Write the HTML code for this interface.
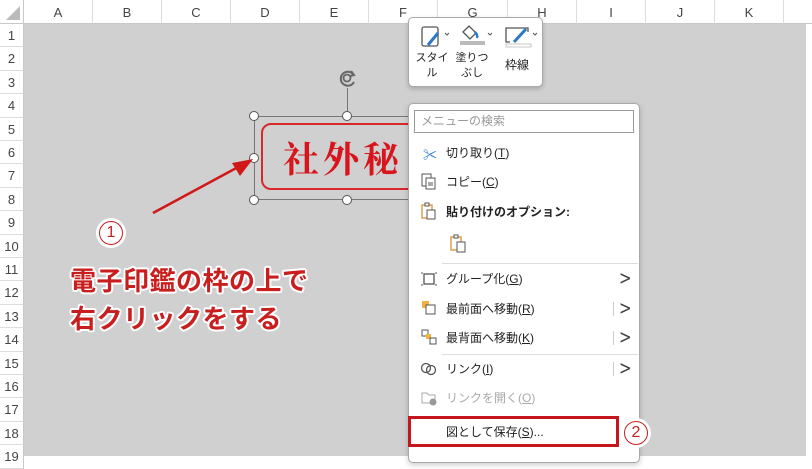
<!DOCTYPE html>
<html><head><meta charset="utf-8"><style>
*{margin:0;padding:0;box-sizing:border-box}
body{width:812px;height:456px;overflow:hidden;background:#fff;position:relative;font-family:"Liberation Sans","Noto Sans CJK JP",sans-serif}
.abs{position:absolute}
.gray{left:24px;top:24px;width:782px;height:432px;background:#d0d0d0}
.colh{top:0;height:24px;font-size:13px;color:#444;text-align:center;line-height:26px;border-right:1px solid #ddd;border-bottom:1px solid #c8c8c8;background:#fff}
.rowh{left:0;width:24px;font-size:13px;color:#444;text-align:center;border-bottom:1px solid #ddd;border-right:1px solid #c8c8c8;background:#fff}
.menu{left:408px;top:103px;width:232px;height:360px;background:#fff;border:1px solid #aaa;border-radius:5px;box-shadow:0 2px 6px rgba(0,0,0,.2)}
.it{left:446px;font-size:12px;color:#222;line-height:16px}
.ar{left:619px;font-size:15px;color:#444;font-family:"DejaVu Sans",sans-serif;transform:scaleY(1.3)}
.ann{font-size:26px;color:#c81e1e;font-weight:bold;letter-spacing:0.5px;text-shadow:2px 0 #fff,-2px 0 #fff,0 2px #fff,0 -2px #fff,1.5px 1.5px #fff,-1.5px -1.5px #fff,1.5px -1.5px #fff,-1.5px 1.5px #fff}
.h{width:10px;height:10px;border:1.5px solid #555;border-radius:50%;background:#fff;position:absolute}
.tb{font-size:11px;line-height:15px;text-align:center;color:#222;white-space:nowrap}
</style></head><body>
<div class="abs gray"></div>
<div class="abs" style="left:0;top:0;width:24px;height:24px;background:#fff;border-right:1px solid #c8c8c8;border-bottom:1px solid #c8c8c8"><div style="position:absolute;right:3px;bottom:3px;width:0;height:0;border-left:14px solid transparent;border-bottom:14px solid #bbb"></div></div>
<div class="abs colh" style="left:24px;width:69px">A</div>
<div class="abs colh" style="left:93px;width:69px">B</div>
<div class="abs colh" style="left:162px;width:69px">C</div>
<div class="abs colh" style="left:231px;width:69px">D</div>
<div class="abs colh" style="left:300px;width:69px">E</div>
<div class="abs colh" style="left:369px;width:69px">F</div>
<div class="abs colh" style="left:438px;width:70px">G</div>
<div class="abs colh" style="left:508px;width:69px">H</div>
<div class="abs colh" style="left:577px;width:69px">I</div>
<div class="abs colh" style="left:646px;width:69px">J</div>
<div class="abs colh" style="left:715px;width:69px">K</div>
<div class="abs colh" style="left:784px;width:28px;border-right:none"></div>
<div id="rows"></div>
<script>
var s='';for(var i=1;i<=19;i++){var t=24+(i-1)*23.4;s+='<div class="abs rowh" style="top:'+t+'px;height:23.4px;line-height:24px">'+i+'</div>';}
document.getElementById('rows').innerHTML=s;
</script>
<!-- stamp -->
<div class="abs" style="left:254px;top:116px;width:186px;height:84px;border:1px solid #777"></div>
<div class="abs" style="left:261px;top:123px;width:160px;height:67px;border:2px solid #d8282a;border-radius:10px"></div>
<div class="abs" style="left:283px;top:132px;font-family:'Noto Serif CJK SC','Liberation Serif',serif;font-size:36px;color:#d8141c;font-weight:bold;letter-spacing:4px">社外秘</div>
<div class="abs" style="left:347px;top:88px;width:1px;height:28px;background:#777"></div>
<svg class="abs" style="left:337px;top:68px" width="22" height="22" viewBox="0 0 22 22"><path d="M16 6A7 7 0 1 0 17 14" fill="none" stroke="#666" stroke-width="2"/><path d="M14 3l3 4-4 1" fill="none" stroke="#666" stroke-width="2"/><circle cx="10" cy="10" r="3.5" fill="none" stroke="#666" stroke-width="1.8"/></svg>
<div class="h" style="left:249px;top:111px"></div>
<div class="h" style="left:342px;top:111px"></div>
<div class="h" style="left:249px;top:153px"></div>
<div class="h" style="left:249px;top:195px"></div>
<div class="h" style="left:342px;top:195px"></div>
<svg class="abs" style="left:0;top:0" width="300" height="260"><line x1="153" y1="213" x2="240" y2="166" stroke="#d01818" stroke-width="2.5"/><polygon points="253,159 232,163 240,176" fill="#d01818"/></svg>
<!-- annotation -->
<div class="abs" style="left:96px;top:218px;width:30px;height:30px;border-radius:50%;background:#fff"></div>
<div class="abs" style="left:99px;top:221px;width:24px;height:24px;border-radius:50%;border:1.5px solid #c81e1e;color:#c81e1e;font-size:16px;text-align:center;line-height:21px">1</div>
<div class="abs ann" style="left:70px;top:261px">電子印鑑の枠の上で</div>
<div class="abs ann" style="left:70px;top:299px">右クリックをする</div>
<!-- toolbar -->
<div class="abs" style="left:408px;top:17px;width:135px;height:70px;background:#fff;border:1px solid #aaa;border-radius:5px;box-shadow:0 2px 5px rgba(0,0,0,.2)"></div>
<svg class="abs" style="left:418px;top:24px" width="125" height="28"><rect x="4" y="3" width="16" height="19" rx="2" fill="none" stroke="#555" stroke-width="1.3"/><path d="M10 21l10-12" stroke="#2b78c5" stroke-width="3"/><path d="M27 9l2 2 2-2" fill="none" stroke="#555"/><path d="M45 8l6-6 7 7-6 6z" fill="none" stroke="#555" stroke-width="1.3"/><path d="M57 8q3 3 2 6" stroke="#2b78c5" stroke-width="2.5" fill="none"/><rect x="42" y="17" width="25" height="4" fill="#bbb"/><path d="M70 9l2 2 2-2" fill="none" stroke="#555"/><path d="M92 18h-4V4h22v4" fill="none" stroke="#555" stroke-width="1.3"/><path d="M96 18l12-13" stroke="#2b78c5" stroke-width="3"/><rect x="88" y="20" width="25" height="3" fill="#fff" stroke="#bbb" stroke-width=".8"/><path d="M115 9l2 2 2-2" fill="none" stroke="#555"/></svg>
<div class="abs tb" style="left:412px;top:51px;width:40px">スタイ<br>ル</div>
<div class="abs tb" style="left:452px;top:51px;width:40px">塗りつ<br>ぶし</div>
<div class="abs tb" style="left:497px;top:58px;width:40px;font-size:12px">枠線</div>
<!-- menu -->
<div class="abs menu"></div>
<div class="abs" style="left:414px;top:110px;width:220px;height:23px;border:1px solid #999;font-size:12px;color:#999;padding-left:6px;line-height:21px">メニューの検索</div>
<div class="abs" style="left:423px;top:145px;font-size:14px;color:#2b78c5">✂</div>
<div class="abs it" style="top:145px">切り取り(<u>T</u>)</div>
<svg class="abs" style="left:421px;top:173px" width="16" height="17"><rect x="1" y="1" width="9" height="12" fill="none" stroke="#555"/><rect x="5" y="5" width="9" height="11" fill="#fff" stroke="#555"/><path d="M7 10h5M7 12h5" stroke="#555"/></svg>
<div class="abs it" style="top:174px">コピー(<u>C</u>)</div>
<svg class="abs" style="left:421px;top:202px" width="16" height="18"><rect x="1" y="3" width="10" height="13" fill="none" stroke="#d9922e" stroke-width="1.3"/><rect x="4" y="1" width="4" height="3" fill="#fff" stroke="#555"/><rect x="6" y="8" width="8" height="9" fill="#fff" stroke="#555"/></svg>
<div class="abs it" style="top:204px;font-weight:bold">貼り付けのオプション:</div>
<svg class="abs" style="left:450px;top:234px" width="18" height="19"><rect x="1" y="3" width="10" height="13" fill="none" stroke="#d9922e" stroke-width="1.3"/><rect x="4" y="1" width="4" height="3" fill="#fff" stroke="#555"/><rect x="7" y="8" width="8" height="10" fill="#fff" stroke="#555"/></svg>
<div class="abs" style="left:442px;top:263px;width:196px;height:1px;background:#ddd"></div>
<svg class="abs" style="left:420px;top:270px" width="18" height="18"><rect x="4" y="4" width="10" height="10" fill="none" stroke="#555" stroke-width="1.3"/><path d="M1 3h2M1 15h2M15 3h2M15 15h2" stroke="#555"/></svg>
<div class="abs it" style="top:271px">グループ化(<u>G</u>)</div><div class="abs ar" style="top:269px">&gt;</div>
<svg class="abs" style="left:421px;top:300px" width="16" height="16"><rect x="1" y="1" width="7" height="7" fill="#f0b340"/><rect x="5" y="5" width="9" height="9" fill="#fff" stroke="#555"/></svg>
<div class="abs it" style="top:301px">最前面へ移動(<u>R</u>)</div><div class="abs" style="left:613px;top:302px;width:1px;height:14px;background:#ccc"></div><div class="abs ar" style="top:299px">&gt;</div>
<svg class="abs" style="left:421px;top:329px" width="16" height="16"><rect x="1" y="1" width="6" height="6" fill="none" stroke="#555"/><rect x="5" y="5" width="5" height="5" fill="#f0b340"/><rect x="9" y="9" width="6" height="6" fill="none" stroke="#555"/></svg>
<div class="abs it" style="top:330px">最背面へ移動(<u>K</u>)</div><div class="abs" style="left:613px;top:331px;width:1px;height:14px;background:#ccc"></div><div class="abs ar" style="top:328px">&gt;</div>
<div class="abs" style="left:442px;top:354px;width:196px;height:1px;background:#ddd"></div>
<svg class="abs" style="left:420px;top:362px" width="18" height="14"><circle cx="6" cy="6" r="4.5" fill="none" stroke="#555" stroke-width="1.3"/><circle cx="11" cy="8" r="4.5" fill="none" stroke="#555" stroke-width="1.3"/></svg>
<div class="abs it" style="top:361px">リンク(<u>I</u>)</div><div class="abs" style="left:613px;top:362px;width:1px;height:14px;background:#ccc"></div><div class="abs ar" style="top:359px">&gt;</div>
<svg class="abs" style="left:421px;top:390px" width="18" height="16"><path d="M1 3h5l2 2h6v8H1z" fill="none" stroke="#aaa"/><circle cx="12" cy="12" r="3.5" fill="#999"/></svg>
<div class="abs it" style="top:390px;color:#aaa">リンクを開く(<u>O</u>)</div>
<div class="abs" style="left:408px;top:416px;width:211px;height:31px;border:3px solid #c4161c"></div>
<div class="abs it" style="top:424px">図として保存(<u>S</u>)...</div>
<div class="abs" style="left:621px;top:418px;width:30px;height:30px;border-radius:50%;background:#fff"></div>
<div class="abs" style="left:624px;top:421px;width:24px;height:24px;border-radius:50%;border:1.5px solid #c81e1e;color:#c81e1e;font-size:16px;text-align:center;line-height:21px">2</div>
</body></html>
